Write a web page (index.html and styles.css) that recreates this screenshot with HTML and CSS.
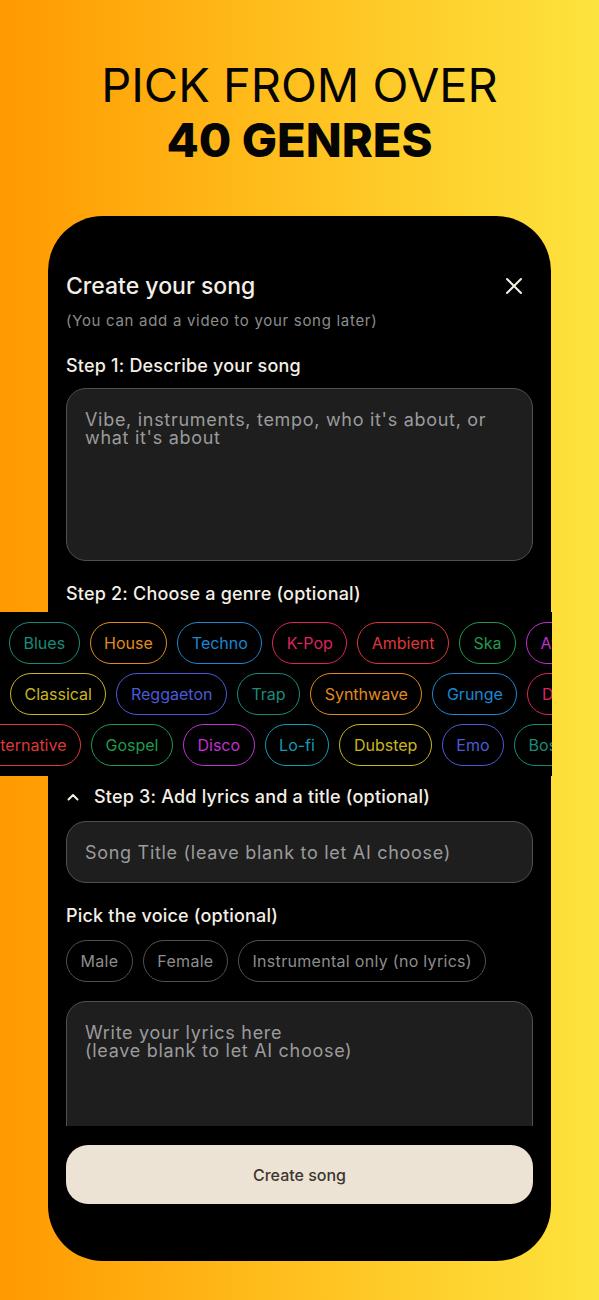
FILE: index.html
```html
<!DOCTYPE html>
<html lang="en">
<head>
  <meta charset="UTF-8" />
  <meta name="viewport" content="width=device-width, initial-scale=1.0" />
  <title>Create your song</title>
  <link rel="stylesheet" href="styles.css">
</head>
<body>
  <!-- Promo heading -->
  <header class="promo">
    <h1 class="promo-title">PICK FROM OVER<br><strong>40 GENRES</strong></h1>
  </header>

  <!-- Phone mockup -->
  <main class="phone">
    <div class="sheet">
      <div class="sheet-head">
        <h2 class="sheet-title">Create your song</h2>
        <button class="close-btn" aria-label="Close">
          <svg width="18" height="18" viewBox="0 0 18 18" fill="none" stroke="#f4efe6" stroke-width="2" stroke-linecap="round">
            <path d="M2 2 L16 16 M16 2 L2 16" />
          </svg>
        </button>
      </div>
      <p class="hint">(You can add a video to your song later)</p>

      <h3 class="step">Step 1: Describe your song</h3>
      <textarea class="field field-describe" placeholder="Vibe, instruments, tempo, who it's about, or what it's about"></textarea>

      <h3 class="step step-2">Step 2: Choose a genre (optional)</h3>
      <!-- GENRES -->
      <div class="genres">
        <div class="genre-row genre-row-first">
          <span class="lead"><span class="chip c-indigo">Jazz</span></span>
          <span class="chip c-teal">Blues</span>
          <span class="chip c-orange">House</span>
          <span class="chip c-blue">Techno</span>
          <span class="chip c-pink">K-Pop</span>
          <span class="chip c-red">Ambient</span>
          <span class="chip c-green">Ska</span>
          <span class="chip c-magenta">Afrobeat</span>
        </div>
        <div class="genre-row">
          <span class="lead"><span class="chip c-cyan">Funk</span></span>
          <span class="chip c-yellow">Classical</span>
          <span class="chip c-indigo">Reggaeton</span>
          <span class="chip c-teal">Trap</span>
          <span class="chip c-orange">Synthwave</span>
          <span class="chip c-blue">Grunge</span>
          <span class="chip c-pink">Drill</span>
        </div>
        <div class="genre-row genre-row-shift">
          <span class="lead"><span class="chip c-red">Alternative</span></span>
          <span class="chip c-green">Gospel</span>
          <span class="chip c-magenta">Disco</span>
          <span class="chip c-cyan">Lo-fi</span>
          <span class="chip c-yellow">Dubstep</span>
          <span class="chip c-indigo">Emo</span>
          <span class="chip c-teal">Bossa Nova</span>
        </div>
      </div>

      <h3 class="step step-toggle">
        <svg width="12" height="8" viewBox="0 0 12 8" fill="none" stroke="#f4efe6" stroke-width="2" stroke-linecap="round" stroke-linejoin="round">
          <path d="M1.5 6.5 L6 2 L10.5 6.5" />
        </svg>
        Step 3: Add lyrics and a title (optional)
      </h3>
      <input class="field field-title" type="text" placeholder="Song Title (leave blank to let AI choose)" />

      <h3 class="step step-voice">Pick the voice (optional)</h3>
      <div class="voices">
        <span class="voice">Male</span>
        <span class="voice">Female</span>
        <span class="voice">Instrumental only (no lyrics)</span>
      </div>

      <textarea class="field field-lyrics" placeholder="Write your lyrics here&#10;(leave blank to let AI choose)"></textarea>
    </div>

    <div class="sheet-foot">
      <button class="create-btn">Create song</button>
    </div>
  </main>
</body>
</html>
```

FILE: styles.css
```css
body {
  margin: 0;
  height: 1300px;
  overflow: hidden;
  font-family: Inter, "Noto Sans", sans-serif;
  background: linear-gradient(90deg, #ff9900 0%, #ffbd1c 45%, #fde33e 100%);
}
.promo {
  padding-top: 57px;
  text-align: center;
}
.promo-title {
  margin: 0;
  font-size: 47px;
  line-height: 55px;
  font-weight: 400;
  color: #050505;
}
.promo-title strong {
  font-weight: 800;
}
.phone {
  width: 503px;
  margin: 49px auto 0;
  background: #000;
  border-radius: 55px;
  display: flex;
  flex-direction: column;
}
.sheet {
  height: 910px;
  box-sizing: border-box;
  padding: 55px 18px 0;
  overflow-x: visible;
  overflow-y: clip;
  display: flex;
  flex-direction: column;
}
.sheet > * {
  flex-shrink: 0;
}
.sheet-head {
  display: flex;
  align-items: center;
  justify-content: space-between;
  height: 30px;
}
.sheet-title {
  margin: 0;
  font-size: 23px;
  font-weight: 500;
  color: #f4efe6;
}
.close-btn {
  background: none;
  border: none;
  padding: 0;
  margin-right: 10px;
  width: 18px;
  height: 18px;
  display: flex;
}
.hint {
  margin: 10px 0 0;
  font-size: 15px;
  line-height: 20px;
  color: #8c8c8c;
  letter-spacing: 0.7px;
}
.step {
  margin: 23px 0 0;
  font-size: 18px;
  line-height: 24px;
  font-weight: 500;
  letter-spacing: 0.2px;
  color: #f4efe6;
}
.field {
  box-sizing: border-box;
  width: 100%;
  margin: 10px 0 0;
  background: #1e1e1e;
  border: 1px solid #505050;
  border-radius: 20px;
  font-family: inherit;
  font-size: 18px;
  letter-spacing: 0.7px;
  color: #eee;
  outline: none;
  resize: none;
}
.field::placeholder {
  color: #9b9b9b;
}
.field-describe {
  height: 173px;
  padding: 22px 18px;
  line-height: 18px;
}
.step-2 {
  margin-top: 21px;
}
.genres {
  margin: 6px -19px 0 -66px;
  padding: 10px 0 10px;
  background: #000;
  overflow: hidden;
  display: flex;
  flex-direction: column;
  gap: 9px;
}
.genre-row {
  display: flex;
  gap: 10px;
}
.genre-row-first {
  margin-left: -1px;
}
.genre-row-shift {
  padding-left: 81px;
}
.lead {
  width: 0;
  flex-shrink: 0;
  display: flex;
  justify-content: flex-end;
}
.chip {
  flex-shrink: 0;
  box-sizing: border-box;
  height: 42px;
  padding: 0 13.5px;
  border: 1.5px solid currentColor;
  border-radius: 999px;
  display: inline-flex;
  align-items: center;
  font-size: 16px;
  white-space: nowrap;
}
.c-teal { color: #1a8b78; }
.c-orange { color: #e08a22; }
.c-blue { color: #1c87d0; }
.c-pink { color: #dc2460; }
.c-red { color: #de383a; }
.c-green { color: #1f9a4e; }
.c-magenta { color: #c22fd0; }
.c-cyan { color: #149bb3; }
.c-yellow { color: #cab522; }
.c-indigo { color: #4c5ad6; }
.step-toggle {
  margin-top: 9px;
  display: flex;
  align-items: center;
  gap: 15px;
  padding-left: 1px;
}
.field-title {
  height: 62px;
  margin-top: 12px;
  padding: 0 18px;
}
.step-voice {
  margin-top: 21px;
}
.voices {
  display: flex;
  gap: 10px;
  margin-top: 12px;
}
.voice {
  box-sizing: border-box;
  height: 42px;
  padding: 0 13.5px;
  border: 1px solid #505050;
  border-radius: 999px;
  display: inline-flex;
  align-items: center;
  font-size: 16px;
  letter-spacing: 0.3px;
  color: #8d8d8d;
  white-space: nowrap;
}
.field-lyrics {
  height: 180px;
  margin-top: 19px;
  padding: 22px 18px;
  line-height: 18px;
}
.sheet-foot {
  padding: 19px 18px 57px;
}
.create-btn {
  width: 100%;
  height: 59px;
  border: none;
  border-radius: 22px;
  background: #ede3d5;
  color: #3b3630;
  font-family: inherit;
  font-size: 16px;
  font-weight: 500;
}
```
